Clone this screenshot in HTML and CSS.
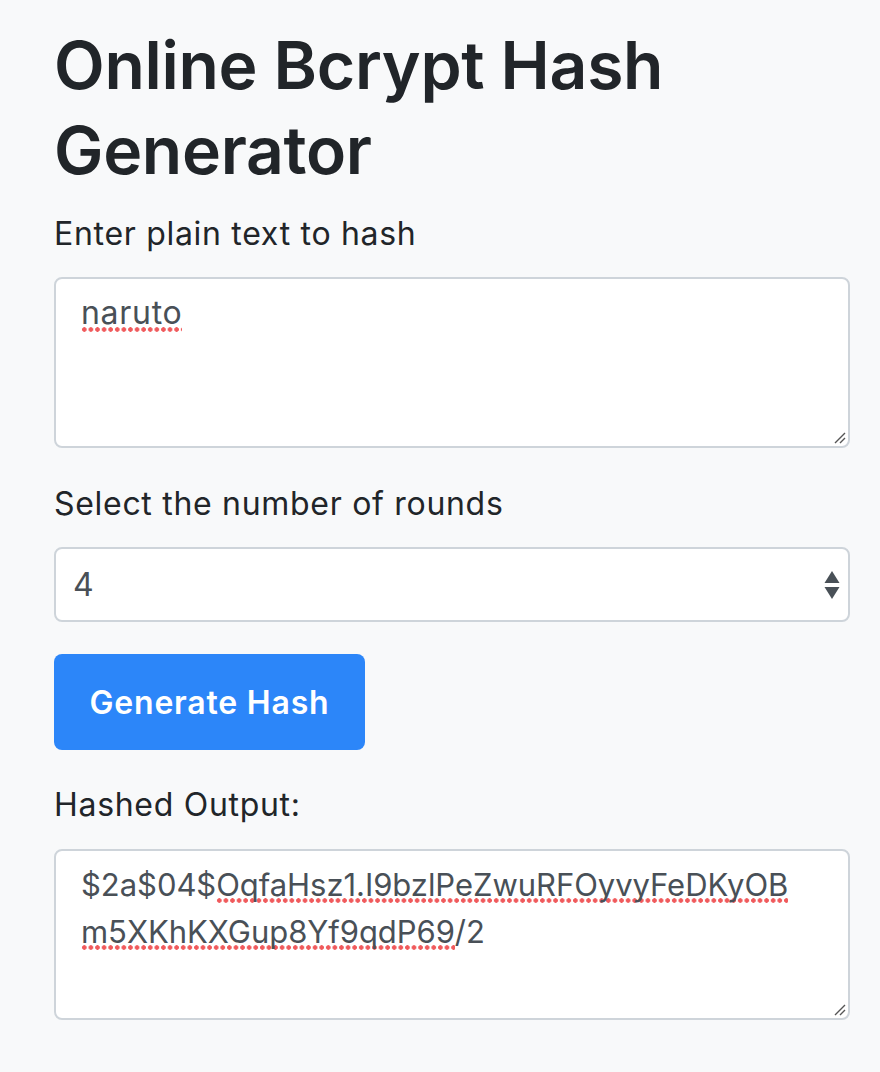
FILE: index.html
```html
<!DOCTYPE html>
<html lang="en">
<head>
<meta charset="utf-8">
<title>Online Bcrypt Hash Generator</title>
<link rel="stylesheet" href="styles.css">
</head>
<body>
<main class="page">
  <h1 class="title">Online Bcrypt Hash Generator</h1>

  <label class="field-label label-plain">Enter plain text to hash</label>
  <div class="textbox textbox-input">
    <div class="textbox-line"><span class="misspelled">naruto</span></div>
    <svg class="grip" width="14" height="14" viewBox="0 0 14 14" aria-hidden="true">
      <path d="M13 3 L3 13 M13 8 L8 13" stroke="#555" stroke-width="1.4" fill="none"/>
    </svg>
  </div>

  <label class="field-label label-rounds">Select the number of rounds</label>
  <div class="select">
    <span class="select-value">4</span>
    <svg class="select-arrows" width="16" height="32" viewBox="0 0 16 32" aria-hidden="true">
      <path d="M8 2 L15.5 14 L0.5 14 Z" fill="#495057"/>
      <path d="M0.5 18 L15.5 18 L8 30 Z" fill="#495057"/>
    </svg>
  </div>

  <button class="btn-primary" type="button">Generate Hash</button>

  <label class="field-label label-output">Hashed Output:</label>
  <div class="textbox textbox-output">
    <div class="textbox-line">$2a$04$<span class="misspelled">OqfaHsz1.I9bzlPeZwuRFOyvyFeDKyOB</span></div>
    <div class="textbox-line"><span class="misspelled">m5XKhKXGup8Yf9qdP69</span>/2</div>
    <svg class="grip" width="14" height="14" viewBox="0 0 14 14" aria-hidden="true">
      <path d="M13 3 L3 13 M13 8 L8 13" stroke="#555" stroke-width="1.4" fill="none"/>
    </svg>
  </div>
</main>
</body>
</html>
```

FILE: styles.css
```css
html, body {
  margin: 0;
  padding: 0;
  background: #f8f9fa;
}

body {
  font-family: Inter, "Open Sans", "Noto Sans", sans-serif;
  color: #212529;
}

.page {
  display: flex;
  flex-direction: column;
  align-items: flex-start;
  padding: 23px 30px 0 54px;
  width: 796px;
}

.title {
  margin: 0;
  font-size: 66px;
  line-height: 85px;
  font-weight: 600;
  letter-spacing: -0.3px;
  color: #212529;
  width: 700px;
}

.field-label {
  display: block;
  font-size: 32px;
  line-height: 48px;
  font-weight: 400;
  letter-spacing: 0.7px;
  color: #212529;
}

.label-plain {
  margin-top: 17px;
  margin-bottom: 19px;
}

.label-rounds {
  margin-top: 32px;
  margin-bottom: 19px;
}

.label-output {
  margin-top: 31px;
  margin-bottom: 20px;
}

.textbox {
  position: relative;
  box-sizing: border-box;
  width: 796px;
  height: 171px;
  background: #fff;
  border: 2px solid #ced4da;
  border-radius: 8px;
  padding: 10px 25px;
  font-size: 32px;
  line-height: 47px;
  letter-spacing: 0.7px;
  color: #495057;
}

.textbox-output {
  font-size: 31px;
  letter-spacing: -0.05px;
}

.textbox-line {
  white-space: nowrap;
}

.misspelled {
  background-image: radial-gradient(circle, #f05a5c 2px, rgba(240, 90, 92, 0) 2.5px);
  background-repeat: repeat-x;
  background-size: 6.6px 5px;
  background-position: 0 100%;
}

.grip {
  position: absolute;
  right: 2px;
  bottom: 2px;
}

.select {
  box-sizing: border-box;
  width: 796px;
  height: 75px;
  background: #fff;
  border: 2px solid #ced4da;
  border-radius: 8px;
  display: flex;
  align-items: center;
  justify-content: space-between;
  padding: 0 8px 0 17px;
  font-size: 32px;
  color: #495057;
}

.select-arrows {
  display: block;
}

.btn-primary {
  margin-top: 32px;
  box-sizing: border-box;
  width: 311px;
  height: 96px;
  background: #2c86f9;
  color: #fff;
  border: none;
  border-radius: 8px;
  font-family: Inter, "Open Sans", sans-serif;
  font-size: 32px;
  font-weight: 600;
  letter-spacing: 0.8px;
  padding: 0;
}
```
